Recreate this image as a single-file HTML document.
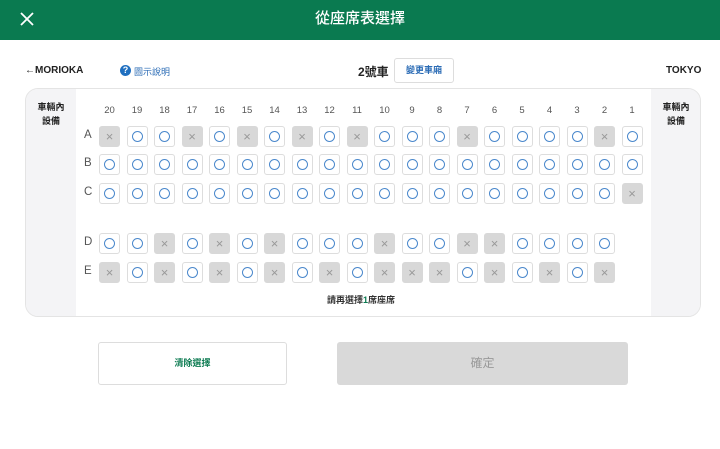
<!DOCTYPE html>
<html><head><meta charset="utf-8">
<style>
body{margin:0;width:720px;height:449px;background:#fff;font-family:"Liberation Sans","Noto Sans CJK TC",sans-serif;position:relative;overflow:hidden;color:#222}
.hdr{position:absolute;left:0;top:0;width:720px;height:40px;background:#0a7a50;color:#fff;text-align:center;font-size:15px;line-height:38px;font-weight:500}
.a{position:absolute}
.panel{position:absolute;left:25px;top:88px;width:674px;height:227px;border:1px solid #e4e4e4;border-radius:13px;overflow:hidden;background:#fff}
.side{position:absolute;top:0;width:50px;height:227px;background:#f4f4f6;font-size:9px;font-weight:bold;text-align:center;line-height:14px;padding-top:11px;box-sizing:border-box}
.s{position:absolute;width:21px;height:21px;box-sizing:border-box;border:1px solid #ddd;border-radius:3px;background:#fff}
.s.o::after{content:"";position:absolute;left:4px;top:4px;width:9px;height:9px;border:1px solid #4a88cc;border-radius:50%}
.s.x{background:#d8d8d8;border-color:#d8d8d8;color:#999;font-size:13px;text-align:center;line-height:20px}
.n{position:absolute;font-size:9.5px;color:#555;width:21px;text-align:center}
.r{position:absolute;font-size:11.5px;color:#555}
</style></head><body>
<div class="hdr">從座席表選擇</div>
<svg class="a" style="left:20px;top:12px" width="14" height="14"><path d="M1 1L13 13M13 1L1 13" stroke="#fff" stroke-width="1.8"/></svg>
<div class="a" style="left:25px;top:65px;font-size:10px;font-weight:bold">←MORIOKA</div>
<div class="a" style="left:120px;top:65px;width:11px;height:11px;border-radius:50%;background:#1f6fc0;color:#fff;font-size:9px;font-weight:bold;text-align:center;line-height:11px">?</div>
<div class="a" style="left:134px;top:65px;font-size:9px;color:#2a6bb5">圖示說明</div>
<div class="a" style="left:358px;top:63px;font-size:12px;font-weight:bold">2號車</div>
<div class="a" style="left:394px;top:58px;width:60px;height:25px;border:1px solid #ddd;border-radius:3px;box-sizing:border-box;font-size:9px;color:#2a6bb5;font-weight:bold;text-align:center;line-height:23px">變更車廂</div>
<div class="a" style="left:666px;top:65px;font-size:10px;font-weight:bold">TOKYO</div>
<div class="panel">
<div class="side" style="left:0">車輛內<br>設備</div>
<div class="side" style="left:625px">車輛內<br>設備</div>
</div>
<div id="g"></div>
<div class="a" style="left:327px;top:293px;font-size:9px;font-weight:bold;color:#333">請再選擇<span style="color:#0a7a50">1</span>席座席</div>
<div class="a" style="left:98px;top:342px;width:189px;height:43px;border:1px solid #ddd;border-radius:3px;box-sizing:border-box;text-align:center;line-height:41px;font-size:9px;font-weight:bold;color:#0a7a50">清除選擇</div>
<div class="a" style="left:337px;top:342px;width:291px;height:43px;background:#d9d9d9;border-radius:3px;text-align:center;line-height:43px;font-size:12px;color:#999">確定</div>
<script>
var rows={A:[126,"xooxoxoxoxoooxooooxo"],B:[154,"oooooooooooooooooooo"],C:[183,"ooooooooooooooooooox"],D:[233,"ooxoxoxoooxooxxoooo"],E:[262,"xoxoxoxoxoxxxoxoxox"]};
var h="";
for(var i=0;i<20;i++){var x=99+i*27.5;h+='<div class="n" style="left:'+x+'px;top:105px">'+(20-i)+'</div>';}
for(var k in rows){var y=rows[k][0],p=rows[k][1];h+='<div class="r" style="left:84px;top:'+(y+3)+'px">'+k+'</div>';
for(var i=0;i<p.length;i++){var x=99+i*27.5;h+='<div class="s '+p[i]+'" style="left:'+x+'px;top:'+y+'px">'+(p[i]=="x"?"×":"")+'</div>';}}
document.getElementById("g").innerHTML=h;
</script>
</body></html>
